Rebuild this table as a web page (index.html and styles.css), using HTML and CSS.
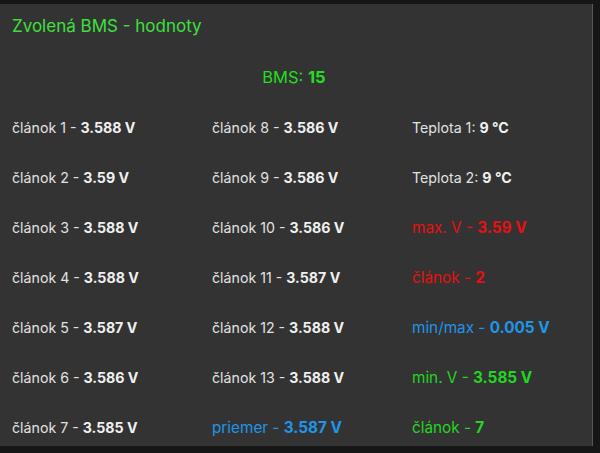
FILE: index.html
```html
<!DOCTYPE html>
<html lang="sk">
<head>
<meta charset="utf-8">
<link rel="stylesheet" href="styles.css">
</head>
<body>
<div class="panel">
  <h1 class="title">Zvolená BMS - hodnoty</h1>
  <div class="bms">BMS: <b>15</b></div>
  <div class="grid">
    <div class="cell">článok 1 - <b>3.588 V</b></div>
    <div class="cell">článok 8 - <b>3.586 V</b></div>
    <div class="cell">Teplota 1: <b>9 °C</b></div>

    <div class="cell">článok 2 - <b>3.59 V</b></div>
    <div class="cell">článok 9 - <b>3.586 V</b></div>
    <div class="cell">Teplota 2: <b>9 °C</b></div>

    <div class="cell">článok 3 - <b>3.588 V</b></div>
    <div class="cell">článok 10 - <b>3.586 V</b></div>
    <div class="cell red">max. V - <b>3.59 V</b></div>

    <div class="cell">článok 4 - <b>3.588 V</b></div>
    <div class="cell">článok 11 - <b>3.587 V</b></div>
    <div class="cell red">článok - <b>2</b></div>

    <div class="cell">článok 5 - <b>3.587 V</b></div>
    <div class="cell">článok 12 - <b>3.588 V</b></div>
    <div class="cell blue">min/max - <b>0.005 V</b></div>

    <div class="cell">článok 6 - <b>3.586 V</b></div>
    <div class="cell">článok 13 - <b>3.588 V</b></div>
    <div class="cell green">min. V - <b>3.585 V</b></div>

    <div class="cell">článok 7 - <b>3.585 V</b></div>
    <div class="cell blue">priemer - <b>3.587 V</b></div>
    <div class="cell green">článok - <b>7</b></div>
  </div>
</div>
</body>
</html>
```

FILE: styles.css
```css
html, body {
  margin: 0;
  padding: 0;
  background: #161616;
  height: 100%;
}
body {
  padding-top: 4px;
  box-sizing: border-box;
  font-family: Inter, "Liberation Sans", Arial, sans-serif;
}
.panel {
  width: 593px;
  height: 442px;
  background: #333333;
  border-right: 1px solid #575757;
  padding: 12px 0 0 0;
  box-sizing: border-box;
}
.title {
  margin: 0 0 0 12px;
  font-size: 17px;
  font-weight: normal;
  line-height: 20px;
  color: #3ee03e;
}
.bms {
  margin-top: 31px;
  text-align: center;
  font-size: 16.5px;
  line-height: 20px;
  color: #22dd22;
  padding-right: 4px;
}
.bms b {
  font-weight: bold;
}
.grid {
  margin-top: 31px;
  display: grid;
  grid-template-columns: 200px 200px 193px;
  row-gap: 30px;
  padding-left: 12px;
}
.cell {
  font-size: 14.2px;
  line-height: 20px;
  color: #e2e2e2;
  white-space: nowrap;
}
.cell b {
  font-weight: bold;
  color: #f0f0f0;
}
.red, .blue, .green { font-size: 15.3px; }
.red, .red b { color: #e81010; }
.blue, .blue b { color: #1f96e6; }
.green, .green b { color: #22d622; }
```
